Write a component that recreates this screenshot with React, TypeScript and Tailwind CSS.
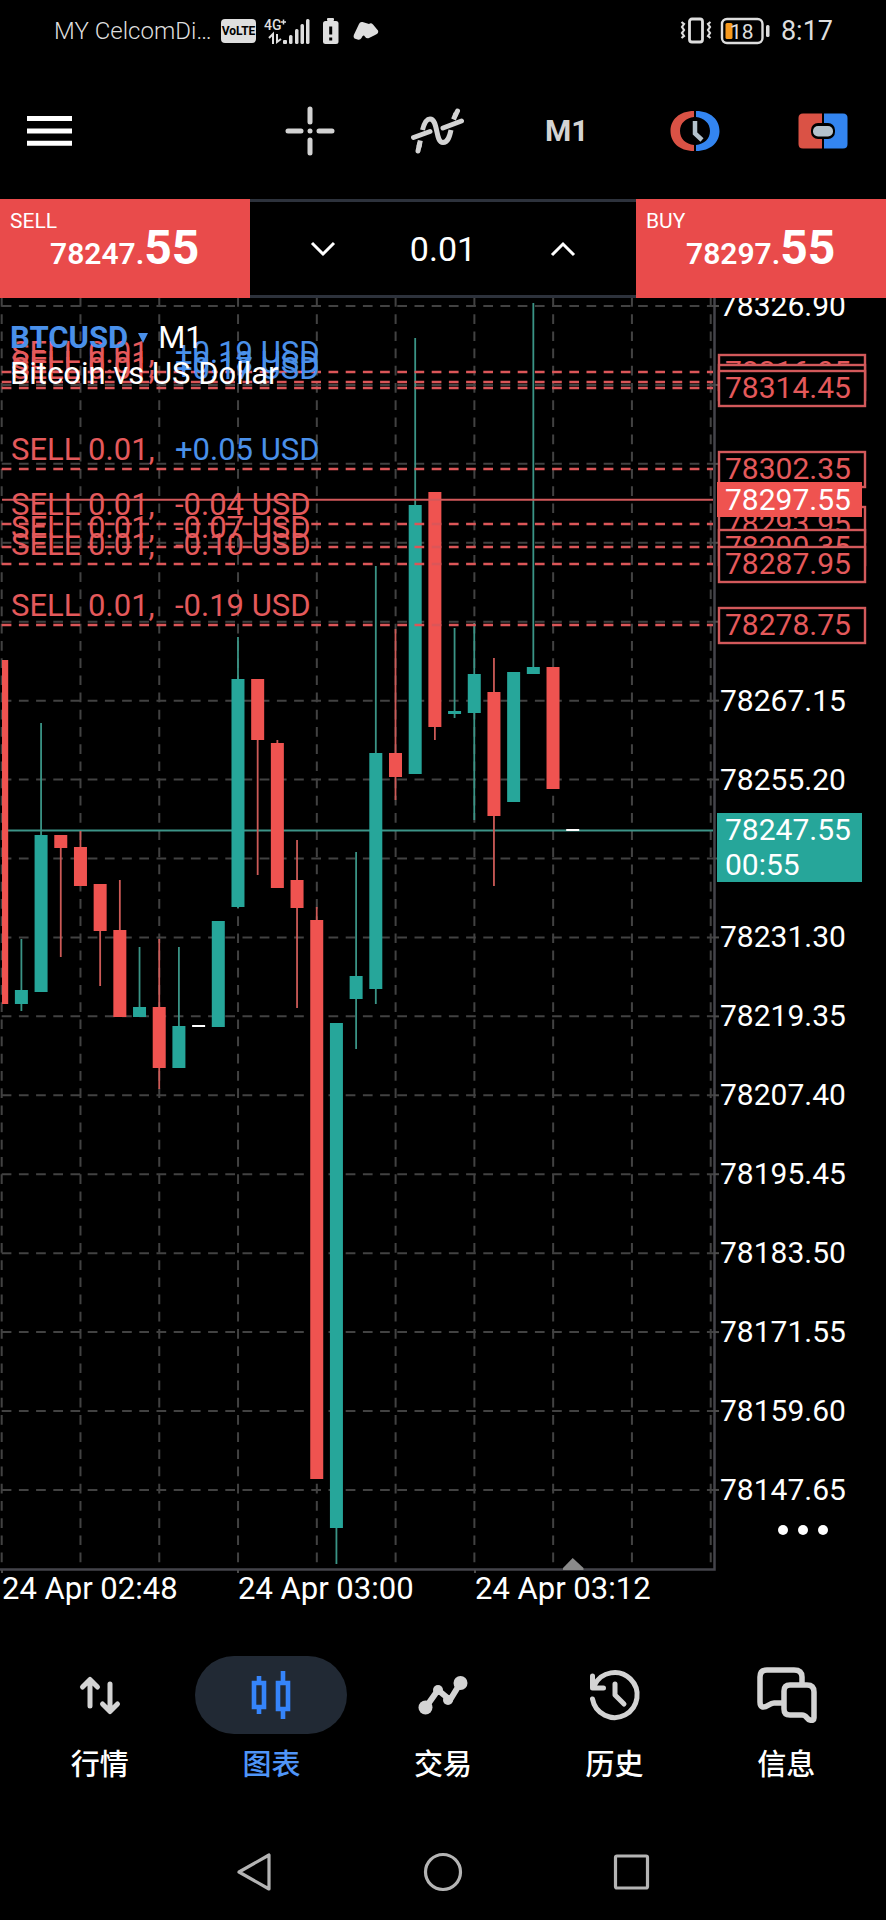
import { useState, type ReactNode } from 'react';

const RED = '#ef5350';
const GREEN = '#26a69a';
const FONT = 'Roboto, "Liberation Sans", sans-serif';

type Candle = { high: number; top: number; bottom: number; low: number; side: 'up' | 'down' | 'flat' };

const c = (side: Candle['side'], high: number, top: number, bottom: number, low: number): Candle => ({ side, high, top, bottom, low });

const candles: Candle[] = [
  c('down', 660, 660, 1004, 1004),
  c('up', 939, 990, 1004, 1011),
  c('up', 723, 835, 992, 992),
  c('down', 835, 835, 848, 957),
  c('down', 831, 847, 886, 886),
  c('down', 884, 884, 931, 986),
  c('down', 880, 930, 1017, 1017),
  c('up', 947, 1007, 1017, 1017),
  c('down', 939, 1007, 1068, 1089),
  c('up', 947, 1026, 1068, 1068),
  c('flat', 1026, 1025, 1027, 1026),
  c('up', 921, 921, 1027, 1027),
  c('up', 637, 679, 907, 908),
  c('down', 679, 679, 740, 875),
  c('down', 740, 743, 888, 888),
  c('down', 840, 880, 908, 1008),
  c('down', 907, 920, 1479, 1479),
  c('up', 1023, 1023, 1528, 1564),
  c('up', 852, 976, 999, 1049),
  c('up', 566, 753, 989, 1004),
  c('down', 629, 753, 777, 800),
  c('up', 338, 505, 774, 774),
  c('down', 492, 492, 727, 740),
  c('up', 628, 711, 714, 718),
  c('up', 623, 674, 713, 820),
  c('down', 658, 692, 816, 886),
  c('up', 672, 672, 802, 802),
  c('up', 303, 667, 674, 674),
  c('down', 667, 667, 789, 789),
  c('flat', 830, 829, 831, 830),
];

const gridTop = 306;
const gridStep = 78.93;
const axisPrices = [
  '78326.90', '', '', '', '', '78267.15', '78255.20', '', '78231.30', '78219.35',
  '78207.40', '78195.45', '78183.50', '78171.55', '78159.60', '78147.65',
];
const columns = Array.from({ length: 10 }, (_, i) => 1.7 + i * 78.78);
const times = [
  { x: 2, label: '24 Apr 02:48' },
  { x: 238, label: '24 Apr 03:00' },
  { x: 475, label: '24 Apr 03:12' },
];

const positions = [
  { y: 372, price: '78316.95', profit: '+0.19' },
  { y: 382, price: '78315.45', profit: '+0.18' },
  { y: 388, price: '78314.45', profit: '+0.17' },
  { y: 469, price: '78302.35', profit: '+0.05' },
  { y: 524, price: '78293.95', profit: '-0.04' },
  { y: 547, price: '78290.35', profit: '-0.07' },
  { y: 564, price: '78287.95', profit: '-0.10' },
  { y: 625, price: '78278.75', profit: '-0.19' },
];

function Chart() {
  return (
    <svg viewBox="0 298 886 1317" className="block h-auto w-full" fontFamily={FONT} fontSize="30" role="img" aria-label="BTCUSD M1">
      <g stroke="#424242" strokeWidth="2" strokeDasharray="9.7 7.5">
        {axisPrices.map((_, i) => (
          <line key={i} x1="1.7" x2="714" y1={gridTop + i * gridStep} y2={gridTop + i * gridStep} />
        ))}
        {columns.map((x) => (
          <line key={x} x1={x} x2={x} y1="297" y2="1566" />
        ))}
      </g>
      <line x1="2" x2="713" y1="830.5" y2="830.5" stroke="#3d9488" strokeWidth="2" />
      <clipPath id="plot"><rect x="2" y="298" width="712" height="1271" /></clipPath>
      <g clipPath="url(#plot)">
        {candles.map((k, i) => {
          const x = 1.7 + i * 19.69;
          const color = k.side === 'up' ? GREEN : k.side === 'down' ? RED : '#ffffff';
          return (
            <g key={i}>
              <line x1={x} x2={x} y1={k.high} y2={k.low} stroke={k.side === 'up' ? '#3a9486' : '#cc5a57'} strokeWidth="1.8" opacity={k.side === 'flat' ? 0 : 1} />
              <rect x={x - 6.5} y={k.top} width="13" height={k.bottom - k.top} fill={color} />
            </g>
          );
        })}
      </g>
      <line x1="2" x2="713" y1="499.7" y2="499.7" stroke="#d2595b" strokeWidth="2" />
      <g stroke="#db5658" strokeWidth="2.4" strokeDasharray="9.7 7.5">
        {positions.map((p) => (
          <line key={p.price} x1="1.7" x2="713" y1={p.y} y2={p.y} />
        ))}
      </g>
      {positions.map((p) => (
        <g key={p.price} fontSize="31">
          <text x="11" y={p.y - 9} fill="#e4595b">SELL 0.01,</text>
          <text x="175" y={p.y - 9} fill={p.profit.startsWith('+') ? '#4a90ea' : '#e4595b'}>{p.profit} USD</text>
        </g>
      ))}
      <path d="M714.500 298V1569.500H0" fill="none" stroke="#44444b" strokeWidth="2.500" />
      <path d="M563 1570V1568L572.700 1558L583.500 1568V1570Z" fill="#8a8a8a" />
      {axisPrices.map((price, i) => (
        <g key={i}>
          <line x1="714" x2="719" y1={gridTop + i * gridStep} y2={gridTop + i * gridStep} stroke="#4c4c4c" strokeWidth="2" />
          <text x="720" y={gridTop + i * gridStep + 10} fill="#fff">{price}</text>
        </g>
      ))}
      {times.map((t) => (
        <g key={t.label}>
          <line x1={t.x} x2={t.x} y1="1570" y2="1573" stroke="#4c4c4c" strokeWidth="2" />
          <text x={t.x} y="1599" fill="#fff" fontSize="31">{t.label}</text>
        </g>
      ))}
      {positions.map((p) => (
        <g key={p.price}>
          <rect x="719" y={p.y - 17} width="146" height="35" fill="#000" stroke="#d2595b" strokeWidth="2.400" />
          <text x="725" y={p.y + 10} fill="#e4595b">{p.price}</text>
        </g>
      ))}
      <rect x="717" y="482" width="145" height="35" fill={RED} />
      <text x="725" y="510" fill="#fff">78297.55</text>
      <rect x="717" y="813" width="145" height="69" fill={GREEN} />
      <text x="725" y="840" fill="#fff">78247.55</text>
      <text x="725" y="875" fill="#fff">00:55</text>
    </svg>
  );
}

function StatusBar() {
  return (
    <header className="flex h-[62px] items-center justify-between pl-[54px] pr-[53px] text-[#dedede]">
      <div className="flex items-center">
        <span className="w-[167px] whitespace-nowrap text-[24px] font-light">MY CelcomDi…</span>
        <span className="flex h-6 w-[35px] items-center justify-center rounded bg-[#dedede] text-[12px] font-bold text-black">VoLTE</span>
        <svg className="ml-2 h-7 w-[47px]" viewBox="0 0 47 28" fill="currentColor">
          <text x="0" y="13" fontSize="14" fontFamily={FONT} fontWeight="500">4G</text>
          <path d="M17 5h5M19.500 2.500v5" stroke="currentColor" strokeWidth="1.500" />
          <path d="M5 21l4-4v10M13 17v8l4-3" fill="none" stroke="currentColor" strokeWidth="2" />
          <rect x="19" y="23" width="4" height="4" rx="1" />
          <rect x="25" y="18" width="3.500" height="9" rx="1.500" />
          <rect x="31" y="12" width="3.500" height="15" rx="1.500" />
          <rect x="36.500" y="7" width="3.500" height="20" rx="1.500" />
          <rect x="42" y="2" width="3.500" height="25" rx="1.500" />
        </svg>
        <svg className="ml-3 h-7 w-4" viewBox="0 0 16 28" fill="currentColor">
          <rect x="4" y="1" width="7" height="3" rx="1" />
          <rect x="0" y="4" width="15.500" height="23" rx="2.500" />
          <path d="M7.700 9.500v8M7.700 20.500v3" stroke="#000" strokeWidth="3" />
        </svg>
        <svg className="ml-3.5 h-5 w-[26px]" viewBox="0 0 26 20" fill="currentColor">
          <path d="M6 3Q7 .5 9.500 1L16 3Q18 1.500 20 3.500L25 9.500Q26 12 23 13.500L16 17Q13 18 11 14.500Q9.500 14 8.500 17Q7 19.500 4.500 18.500L1.500 17.500Q0 16.500 .8 14Z" />
        </svg>
      </div>
      <div className="flex items-center">
        <svg className="h-7 w-8" viewBox="0 0 32 28" fill="none" stroke="currentColor">
          <rect x="9.500" y="2" width="13" height="23" rx="2.500" strokeWidth="2.800" />
          <path d="M1.500 5l2.500 2-2 3 2 3-2 3 2 3-2.500 2M30.500 5L28 7l2 3-2 3 2 3-2 3 2.500 2" strokeWidth="2.200" />
        </svg>
        <svg className="ml-2 h-7 w-[50px]" viewBox="0 0 50 28">
          <rect x="2" y="2" width="40.500" height="24" rx="5" fill="none" stroke="currentColor" strokeWidth="2.400" />
          <rect x="5.500" y="6" width="7" height="16" rx="1.500" fill="#f79a1e" />
          <rect x="46" y="8" width="3.500" height="12" rx="1.500" fill="currentColor" />
          <text x="10" y="21.500" fontSize="21" fontFamily={FONT} fill="currentColor">18</text>
        </svg>
        <span className="ml-[11px] text-[27px] leading-8">8:17</span>
      </div>
    </header>
  );
}

function Toolbar() {
  return (
    <div className="flex h-[137px] items-center justify-between pl-[27px] pr-[38px] text-[#d3d3d3]">
      <button aria-label="Menu" className="h-[50px] w-[46px]">
        <svg viewBox="0 0 46 50" className="h-full w-full">
          <path d="M0 12.500h45M0 25h45M0 37.200h45" stroke="#fff" strokeWidth="5" />
        </svg>
      </button>
      <div className="flex items-center">
        <button aria-label="Crosshair" className="mr-[76px]">
          <svg viewBox="0 0 50 50" className="h-[50px] w-[50px]" stroke="currentColor" strokeWidth="5" strokeLinecap="round">
            <path d="M25 3v13M25 34v13M3 25h13M34 25h13" />
            <circle cx="25" cy="25" r="2.500" fill="currentColor" stroke="none" />
          </svg>
        </button>
        <button aria-label="Indicators" className="mr-[80px]">
          <svg viewBox="0 0 54 50" className="h-[50px] w-[54px]" fill="none" stroke="currentColor" strokeWidth="5">
            <path d="M2.500 31.500L19 25.500M32 22L50.500 15M7 45L8.500 38M44.500 9L46.500 5" strokeLinecap="round" />
            <path d="M8 41L9.300 34.500M11.500 24C13 18 15.500 13 19 13C27.500 13 24 36.500 32 36.500C37 36.500 38.500 31 40 24M42.500 13.500L45 7.500" />
          </svg>
        </button>
        <button className="mr-[83px] w-[42px] text-center text-[30px] font-bold">M1</button>
        <button aria-label="Trading session" className="mr-[78px]">
          <svg viewBox="0 0 50 40" className="h-10 w-[50px]">
            <path d="M24 0C9 0 .5 9 .5 20S9 40 24 40V34C16 33 10 28 10 20S16 7 24 6Z" fill="#da5245" />
            <path d="M26 0C41 0 49.500 9 49.500 20S41 40 26 40V34C34 33 40 28 40 20S34 7 26 6Z" fill="#3385f0" />
            <path d="M25 10V22.500L32 29" fill="none" stroke="#b4c2cc" strokeWidth="4.500" />
          </svg>
        </button>
        <button aria-label="One click trading">
          <svg viewBox="0 0 50 36" className="h-9 w-[50px]">
            <path d="M5 .5H24V35.500H5Q.5 35.500 .5 31V5Q.5 .5 5 .5Z" fill="#da5245" />
            <path d="M26 .5H45Q49.500 .5 49.500 5V31Q49.500 35.500 45 35.500H26Z" fill="#3385f0" />
            <rect x="13" y="10" width="24" height="16" rx="7" fill="#000" />
            <rect x="15" y="13" width="20" height="10.500" rx="5" fill="#b4c2cc" />
          </svg>
        </button>
      </div>
    </div>
  );
}

function Quote({ side, whole, cents }: { side: string; whole: string; cents: string }) {
  return (
    <button className="flex h-full w-[250px] flex-col bg-[#e94b4b] px-2.5 pt-2.5 text-left text-white">
      <span className="text-[21px] leading-6">{side}</span>
      <span className="-mt-3 flex items-baseline pl-10 font-bold">
        <span className="text-[30px] font-semibold leading-[54px]">{whole}.</span>
        <span className="text-[48px] leading-[54px]">{cents}</span>
      </span>
    </button>
  );
}

function TradePanel() {
  const [lots, setLots] = useState(0.01);
  return (
    <div className="flex h-[99px] items-stretch">
      <Quote side="SELL" whole="78247" cents="55" />
      <div className="flex flex-1 items-center justify-between border-y-[3px] border-[#2d323c] px-[60px] text-white">
        <button aria-label="Decrease volume" onClick={() => setLots(Math.max(0.01, lots - 0.01))}>
          <svg viewBox="0 0 26 16" className="h-4 w-[26px]" fill="none" stroke="currentColor" strokeWidth="3"><path d="M2 2l11 11L24 2" /></svg>
        </button>
        <output className="text-[34px] leading-10">{lots.toFixed(2)}</output>
        <button aria-label="Increase volume" onClick={() => setLots(lots + 0.01)}>
          <svg viewBox="0 0 26 16" className="h-4 w-[26px]" fill="none" stroke="currentColor" strokeWidth="3"><path d="M2 14L13 3l11 11" /></svg>
        </button>
      </div>
      <Quote side="BUY" whole="78297" cents="55" />
    </div>
  );
}

const tabs: { label: string; icon: ReactNode }[] = [
  {
    label: '行情',
    icon: <path d="M20 43V17M12.500 24L20 16.500L27.500 24M40 21V47M32.500 41L40 48.500L47.500 41" strokeWidth="5" />,
  },
  {
    label: '图表',
    icon: (
      <g strokeWidth="4.600" strokeLinecap="butt" strokeLinejoin="miter">
        <path d="M13 20h10v24h-10zM18 13v7M18 44v7M37 20h10v26h-10zM42 8v12M42 46v10" />
      </g>
    ),
  },
  {
    label: '交易',
    icon: (
      <g>
        <path d="M13 44L25 27L37 37L48 19" strokeWidth="6" />
        <circle cx="12.500" cy="44.500" r="7" fill="currentColor" stroke="none" />
        <circle cx="25" cy="27" r="5" fill="currentColor" stroke="none" />
        <circle cx="35" cy="37" r="5" fill="currentColor" stroke="none" />
        <circle cx="47.500" cy="20" r="7" fill="currentColor" stroke="none" />
      </g>
    ),
  },
  {
    label: '历史',
    icon: <path d="M7.500 36A22.500 22.500 0 1 0 9.500 22M7.500 13V25H18.500M30 21V32L39 41" strokeWidth="5" />,
  },
  {
    label: '信息',
    icon: (
      <path d="M27 40H18C13 40 11 45 6.500 44Q4 43 4 39V14Q4 7 11 7H38Q46 7 46 14V22M34 22H51Q58 22 58 29V55Q58 58 54 57C50 56 51 52 46 52H34Q28 52 28 46V28Q28 22 34 22Z" strokeWidth="5.500" />
    ),
  },
];

function TabBar() {
  const [active, setActive] = useState('图表');
  return (
    <nav className="grid grid-cols-5 px-3.5 pt-[41px]">
      {tabs.map((tab) => {
        const on = tab.label === active;
        return (
          <button key={tab.label} onClick={() => setActive(tab.label)} className={on ? 'flex flex-col items-center text-[#4f95f8]' : 'flex flex-col items-center text-white'}>
            <span className={on ? 'flex h-[78px] w-[152px] items-center justify-center rounded-full bg-[#212934] text-[#3584fa]' : 'flex h-[78px] w-[152px] items-center justify-center text-[#d3d3d3]'}>
              <svg viewBox="0 0 60 64" className="h-16 w-[60px] overflow-visible" fill="none" stroke="currentColor" strokeLinecap="round" strokeLinejoin="round">{tab.icon}</svg>
            </span>
            <span className="mt-1.5 font-['Noto_Sans_CJK_SC',sans-serif] text-[29px] font-medium leading-[44px]">{tab.label}</span>
          </button>
        );
      })}
    </nav>
  );
}

function SystemNav() {
  return (
    <div className="flex h-[136px] items-center justify-center gap-[149px] pt-10 text-[#b4b4b4]">
      <button aria-label="Back">
        <svg viewBox="0 0 40 40" className="h-10 w-10" fill="none" stroke="currentColor" strokeWidth="3.200" strokeLinejoin="round"><path d="M5 20L35 3V37Z" /></svg>
      </button>
      <button aria-label="Home">
        <svg viewBox="0 0 40 40" className="h-10 w-10" fill="none" stroke="currentColor" strokeWidth="3.200"><circle cx="20" cy="20" r="17.500" /></svg>
      </button>
      <button aria-label="Recent apps">
        <svg viewBox="0 0 40 40" className="h-10 w-10" fill="none" stroke="currentColor" strokeWidth="3.200"><rect x="3.500" y="4" width="32" height="32" rx="1.500" /></svg>
      </button>
    </div>
  );
}

export default function App() {
  return (
    <div className="min-h-screen bg-black font-[Roboto,'Liberation_Sans',sans-serif]">
      <StatusBar />
      <Toolbar />
      <TradePanel />
      <main className="relative">
        <Chart />
        <div className="absolute left-2.5 top-[22px] text-[31px] leading-9 text-white">
          <button className="flex items-center">
            <b className="text-[#4a90ea]">BTCUSD</b>
            <svg viewBox="0 0 10 10" className="mx-2.5 h-2.5 w-2.5" fill="#4a90ea"><path d="M0 0h10L5 10z" /></svg>
            M1
          </button>
          <p>Bitcoin vs US Dollar</p>
        </div>
        <button aria-label="More" className="absolute bottom-20 right-[58px] flex gap-2.5">
          <i className="size-2.5 rounded-full bg-white" />
          <i className="size-2.5 rounded-full bg-white" />
          <i className="size-2.5 rounded-full bg-white" />
        </button>
      </main>
      <TabBar />
      <SystemNav />
    </div>
  );
}
